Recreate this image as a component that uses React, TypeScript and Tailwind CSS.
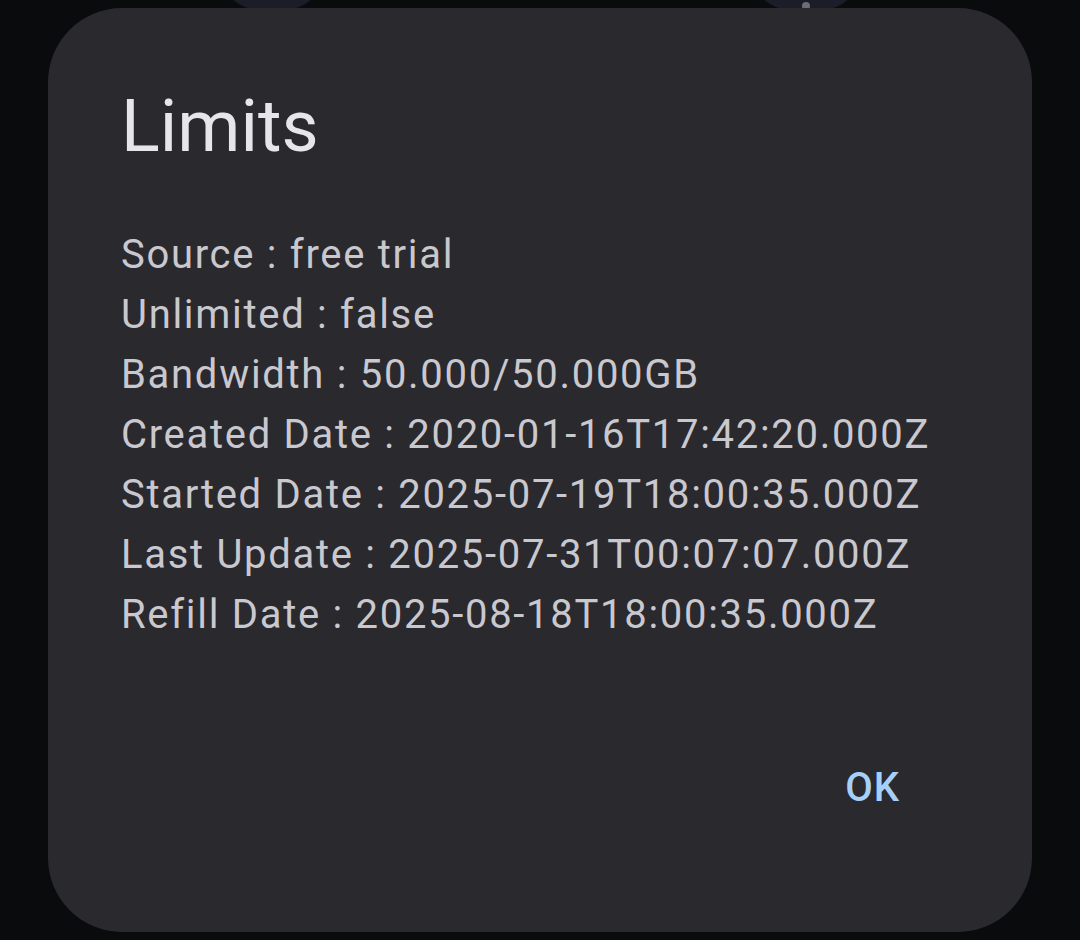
import React from 'react';

const rows: [string, string][] = [
  ['Source', 'free trial'],
  ['Unlimited', 'false'],
  ['Bandwidth', '50.000/50.000GB'],
  ['Created Date', '2020-01-16T17:42:20.000Z'],
  ['Started Date', '2025-07-19T18:00:35.000Z'],
  ['Last Update', '2025-07-31T00:07:07.000Z'],
  ['Refill Date', '2025-08-18T18:00:35.000Z'],
];

// Limits dialog over a dimmed screen
const App: React.FC = () => {
  return (
    <div
      className="w-[1080px] h-[940px] bg-[#0a0b0d] overflow-hidden relative flex flex-col px-[48px] pt-[8px] pb-[8px]"
      style={{ fontFamily: 'Roboto, "Noto Sans", sans-serif' }}
    >
      {/* bits of the screen behind the dialog */}
      <div className="absolute left-[220px] top-[-40px] w-[104px] h-[50px] rounded-b-[40px] bg-[#1b1e28]" />
      <div className="absolute left-[751px] top-[-40px] w-[110px] h-[50px] rounded-b-[40px] bg-[#1b1e28]">
        <div className="absolute left-[51px] bottom-[0px] w-[8px] h-[8px] rounded-full bg-[#6b6e78]" />
      </div>

      <div className="relative flex-1 flex flex-col rounded-[74px] bg-[#2a292e] pl-[73px] pr-[132px] pt-[83px]">
        <h2 className="text-[72px] leading-none text-[#e6e5ea] font-normal">Limits</h2>
        <div className="mt-[62px] flex flex-col">
          {rows.map(([k, v]) => (
            <div key={k} className="text-[40px] leading-[60px] tracking-[1.7px] text-[#c9c8ce] whitespace-nowrap">
              {k} : {v}
            </div>
          ))}
        </div>
        <div className="flex justify-end mt-[113px]">
          <button className="text-[40px] leading-[60px] font-medium tracking-[1px] text-[#a6cffa]">OK</button>
        </div>
      </div>
    </div>
  );
};

export default App;
